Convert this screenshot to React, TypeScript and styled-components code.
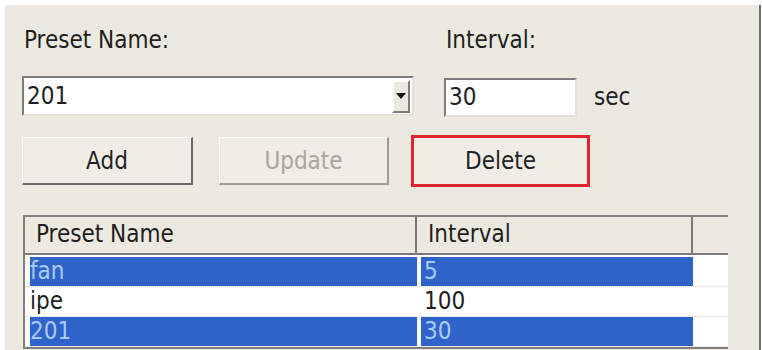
import React from 'react';
import styled, { createGlobalStyle, css } from 'styled-components';

const GlobalStyle = createGlobalStyle`
  html, body {
    margin: 0;
    padding: 0;
    background: #ffffff;
  }
  body {
    font-family: "DejaVu Sans Condensed", "DejaVu Sans", sans-serif;
    font-stretch: condensed;
    color: #1e1e1e;
  }
`;

type Preset = { name: string; interval: number; selected: boolean };

const presets: Preset[] = [
  { name: 'fan', interval: 5, selected: true },
  { name: 'ipe', interval: 100, selected: false },
  { name: '201', interval: 30, selected: true },
];

const App = () => {
  return (
    <>
      <GlobalStyle />
      <Panel>
        <FieldGrid>
          <Label>Preset Name:</Label>
          <Label>Interval:</Label>
          <span />
          <Combo>
            <ComboText>201</ComboText>
            <ComboButton>
              <svg width="10" height="6" viewBox="0 0 10 6">
                <path d="M0 0 H10 L5 6 Z" fill="#111" />
              </svg>
            </ComboButton>
          </Combo>
          <TextBox>30</TextBox>
          <Unit>sec</Unit>
        </FieldGrid>

        <ButtonRow>
          <Button>Add</Button>
          <Button $disabled>Update</Button>
          <Button $highlight>Delete</Button>
        </ButtonRow>

        <Table>
          <HeaderRow>
            <HeaderCell>Preset Name</HeaderCell>
            <HeaderCell>Interval</HeaderCell>
            <HeaderCell />
          </HeaderRow>
          {presets.map((p, i) => (
            <BodyRow key={p.name} $first={i === 0}>
              <NameCell $selected={p.selected}>{p.name}</NameCell>
              <IntervalCell $selected={p.selected}>{p.interval}</IntervalCell>
              <EmptyCell />
            </BodyRow>
          ))}
        </Table>
      </Panel>
    </>
  );
};

const Panel = styled.div`
  margin: 5px 0 0 5px;
  width: 756px;
  height: 345px;
  box-sizing: border-box;
  padding: 22px 0 0 17px;
  background: #eceae0;
  border-right: 2px solid #6f6f6f;
  overflow: hidden;
`;

const FieldGrid = styled.div`
  display: grid;
  grid-template-columns: 422px 150px auto;
  grid-template-rows: 27px 40px;
  row-gap: 22px;
  align-items: center;
`;

const Label = styled.div`
  font-size: 24px;
  line-height: 27px;
  padding-left: 2px;
`;

const sunken = css`
  box-sizing: border-box;
  background: #ffffff;
  border-top: 2px solid #7c7c7c;
  border-left: 2px solid #7c7c7c;
  border-right: 2px solid #e4e2d8;
  border-bottom: 2px solid #e4e2d8;
`;

const Combo = styled.div`
  ${sunken};
  width: 392px;
  height: 40px;
  display: flex;
  align-items: center;
  padding: 0 2px 0 3px;
`;

const ComboText = styled.span`
  flex: 1;
  font-size: 24px;
`;

const ComboButton = styled.span`
  box-sizing: border-box;
  width: 18px;
  height: 33px;
  display: flex;
  align-items: center;
  justify-content: center;
  background: #eceae0;
  border-top: 2px solid #ffffff;
  border-left: 2px solid #ffffff;
  border-right: 2px solid #7c7c7c;
  border-bottom: 2px solid #7c7c7c;
`;

const TextBox = styled.div`
  ${sunken};
  width: 133px;
  height: 39px;
  font-size: 24px;
  line-height: 35px;
  padding-left: 3px;
  margin-top: 2px;
`;

const Unit = styled.span`
  font-size: 24px;
  margin-top: 2px;
`;

const ButtonRow = styled.div`
  display: flex;
  align-items: center;
  margin-top: 19px;
  height: 52px;
`;

const Button = styled.div<{ $disabled?: boolean; $highlight?: boolean }>`
  box-sizing: border-box;
  display: flex;
  align-items: center;
  justify-content: center;
  font-size: 24px;
  background: #efede5;
  width: 171px;
  height: 48px;
  margin-right: 26px;
  border-top: 1px solid #fbfbf7;
  border-left: 1px solid #fbfbf7;
  border-right: 2px solid #6a6a6a;
  border-bottom: 2px solid #6a6a6a;
  color: ${({ $disabled }) => ($disabled ? '#a9a79d' : '#222222')};

  ${({ $disabled }) =>
    $disabled &&
    css`
      width: 170px;
      margin-right: 22px;
      border-right-color: #9a9a96;
      border-bottom-color: #9a9a96;
    `}

  ${({ $highlight }) =>
    $highlight &&
    css`
      width: 179px;
      height: 52px;
      border: 3px solid #e0262b;
      margin-right: 0;
    `}
`;

const Table = styled.div`
  margin-top: 28px;
  margin-left: 1px;
  width: 705px;
  background: #ffffff;
  border-left: 2px solid #808080;
  border-top: 2px solid #808080;
  border-bottom: 2px solid #808080;
  box-sizing: border-box;
`;

const columns = css`
  display: grid;
  grid-template-columns: 392px 276px 35px;
`;

const HeaderRow = styled.div`
  ${columns};
  height: 36px;
  background: #eceae0;
  border-bottom: 2px solid #7a7a7a;
`;

const HeaderCell = styled.div`
  font-size: 24px;
  line-height: 34px;
  padding-left: 11px;
  border-right: 2px solid #7a7a7a;

  &:last-child {
    border-right: none;
  }
`;

const BodyRow = styled.div<{ $first?: boolean }>`
  ${columns};
  height: 29px;
  margin-top: ${({ $first }) => ($first ? '2px' : '0')};
  border-bottom: 1px dotted #d8d8d8;
`;

const cell = css<{ $selected?: boolean }>`
  font-size: 24px;
  line-height: 29px;
  white-space: nowrap;
  background: ${({ $selected }) => ($selected ? '#2f63c9' : 'transparent')};
  color: ${({ $selected }) => ($selected ? '#a9cbf6' : '#1e1e1e')};
`;

const NameCell = styled.div<{ $selected?: boolean }>`
  ${cell};
  margin-left: 5px;
`;

const IntervalCell = styled.div<{ $selected?: boolean }>`
  ${cell};
  margin-left: 4px;
  padding-left: 3px;
`;

const EmptyCell = styled.div``;

export default App;
